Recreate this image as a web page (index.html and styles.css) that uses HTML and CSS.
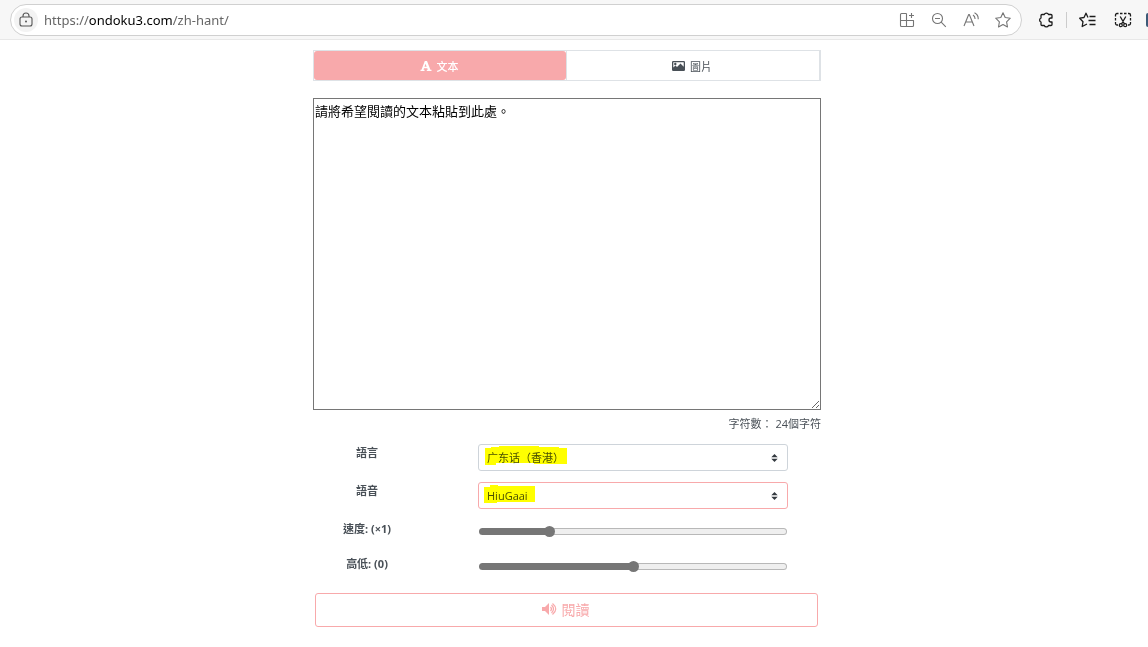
FILE: index.html
```html
<!DOCTYPE html>
<html lang="zh-Hant">
<head>
    <meta charset="UTF-8">
    <meta name="viewport" content="width=device-width, initial-scale=1.0">
    <title>ondoku3</title>
    <link rel="stylesheet" href="styles.css">
</head>
<body>
    <!-- Browser toolbar -->
    <header class="toolbar">
        <div class="address-bar">
            <button class="site-info" type="button" aria-label="Site info">
                <svg width="16" height="16" viewBox="0 0 16 16">
                    <rect x="2" y="5" width="12" height="9" rx="2"/>
                    <path d="M5 5V4a3 3 0 0 1 6 0v1"/>
                    <circle class="solid" cx="8" cy="9.500" r="1"/>
                </svg>
            </button>
            <div class="url">https://<b>ondoku3.com</b>/zh-hant/</div>
            <div class="address-actions">
                <button type="button" aria-label="Apps">
                    <svg width="16" height="16" viewBox="0 0 16 16">
                        <path d="M7.500 1.500h-5a1 1 0 0 0-1 1v11a1 1 0 0 0 1 1h11a1 1 0 0 0 1-1v-5h-13M7.500 1.500v13M12.500 1v5M10 3.500h5"/>
                    </svg>
                </button>
                <button type="button" aria-label="Zoom out">
                    <svg width="16" height="16" viewBox="0 0 16 16">
                        <circle cx="6.500" cy="6.500" r="5"/>
                        <path d="M10.200 10.200l4.600 4.600M4 6.500h5"/>
                    </svg>
                </button>
                <button type="button" aria-label="Read aloud">
                    <svg width="16" height="16" viewBox="0 0 16 16">
                        <path d="M1 14L5.700 2.500h.6L11 14M2.700 10h6.600M10 3q2.200 1.500 2 4M11.500 .8q4 2 3.700 6.500"/>
                    </svg>
                </button>
                <button type="button" aria-label="Favorite">
                    <svg width="16" height="16" viewBox="0 0 16 16">
                        <path d="M8 .8l2.200 4.700 5.100.7-3.700 3.600.9 5.200L8 12.500 3.500 15l.9-5.200L.7 6.200l5.100-.7z"/>
                    </svg>
                </button>
            </div>
        </div>
        <div class="toolbar-actions">
            <button type="button" aria-label="Extensions">
                <svg width="16" height="16" viewBox="0 0 16 16">
                    <path d="M4 2.500h2.300a2.200 2 0 0 1 4.200 0H13a1 1 0 0 1 1 1V6h-1a2 2 0 0 0 0 4h1v2.500a1 1 0 0 1-1 1h-2.500a2.200 2 0 0 1-4.200 0H4a1 1 0 0 1-1-1V10a2 2.100 0 0 1 0-4V3.500a1 1 0 0 1 1-1z"/>
                </svg>
            </button>
            <span class="divider"></span>
            <button type="button" aria-label="Favorites">
                <svg width="18" height="16" viewBox="0 0 18 16">
                    <path d="M9 5.500L7 1.200 5 5.500l-4.300.7L4 9.700 3.200 14.500 8 12M10.500 4.500h6M9.500 8.500h7M10.500 12.500h6"/>
                </svg>
            </button>
            <button type="button" aria-label="Web capture">
                <svg width="18" height="16" viewBox="0 0 18 16">
                    <path d="M1.500 4.500V3a1.500 1.500 0 0 1 1.500-1.500h1.500M6 1.500h2.500M10 1.500h2.500M14 1.500h1a1.500 1.500 0 0 1 1.500 1.500v1.500M16.500 6v2.500M1.500 6v2.500M1.500 10v1.500a1.500 1.500 0 0 0 1.500 1.500h1M16.500 10v1.500a1.500 1.500 0 0 1-1.500 1.500h-1M6.200 4.500l4.300 7.500M11.800 4.500L7.500 12"/>
                    <circle cx="6.800" cy="13.200" r="1.500"/>
                    <circle cx="11.200" cy="13.200" r="1.500"/>
                </svg>
            </button>
            <button class="profile" type="button" aria-label="Profile"></button>
        </div>
    </header>

    <main class="page">
        <div class="container">
            <div class="tabs">
                <button class="tab active" type="button">
                    <svg width="12" height="10" viewBox="0 0 12 10">
                        <path fill-rule="evenodd" d="M4.800 0h2.200l3.400 8.700H11.500V10H6.800V8.700h1L7.300 7.200H4L3.500 8.700h1V10H.5V8.700h1zM5.500 2.700L4.500 5.800h2.200z"/>
                    </svg>
                    文本
                </button>
                <button class="tab" type="button">
                    <svg width="13" height="10" viewBox="0 0 13 10">
                        <path fill-rule="evenodd" d="M1.200 0h10.600Q13 0 13 1.200v7.600Q13 10 11.800 10H1.200Q0 10 0 8.800V1.200Q0 0 1.200 0zM1.300 1.300v5.200L3.500 4.500 5 6l3.500-3.500 3.200 3.200V1.300zM3.300 1.800a1.200 1.200 0 1 1 0 2.400 1.200 1.200 0 0 1 0-2.400z"/>
                    </svg>
                    圖片
                </button>
            </div>

            <textarea class="text-input" id="text" aria-label="文本">請將希望閱讀的文本粘貼到此處。</textarea>
            <p class="count">字符數： 24個字符</p>

            <!-- Voice settings -->
            <div class="settings">
                <label for="language">語言</label>
                <div class="select-wrap">
                    <select id="language">
                        <option>广东话（香港）</option>
                    </select>
                    <svg class="marker" width="84" height="20" viewBox="0 0 84 20">
                        <path d="M1 2h6V1h8V0h40v1h20v1h8v16H50v-1H12v2H1z"/>
                    </svg>
                </div>

                <label for="voice">語音</label>
                <div class="select-wrap">
                    <select class="selected" id="voice">
                        <option>HiuGaai</option>
                    </select>
                    <svg class="marker" width="84" height="20" viewBox="0 0 84 20">
                        <path d="M0 3h6V1h8v1h37v16H13v1H0z"/>
                    </svg>
                </div>

                <label for="speed">速度: (×1)</label>
                <input class="speed" type="range" id="speed" min="0.3" max="4" step="0.01" value="1.1">

                <label for="pitch">高低: (0)</label>
                <input class="pitch" type="range" id="pitch" min="-20" max="20" value="0">
            </div>

            <button class="read-button" type="button">
                <svg width="15" height="12" viewBox="0 0 15 12">
                    <path d="M0 4h3l4-4v12L3 8H0z"/>
                    <path class="wave" d="M8.500 4q2 2 0 4M9.500 2q4 4 0 8M10.500 .5q6.500 5.500 0 11"/>
                </svg>
                閱讀
            </button>
        </div>
    </main>
</body>
</html>
```
FILE: styles.css
```css
* {
    box-sizing: border-box;
}
body {
    margin: 0;
    background-color: #fff;
    color: #495057;
    font-family: "Open Sans", "Noto Sans CJK TC", sans-serif;
    font-size: 11px;
    overflow: hidden;
}
button {
    font-family: inherit;
    cursor: pointer;
}

/* Toolbar */
.toolbar {
    display: flex;
    align-items: center;
    height: 40px;
    padding-left: 10px;
    background-color: #f7f7f7;
    border-bottom: 1px solid #e8e8e8;
}
.toolbar button {
    display: flex;
    flex: none;
    padding: 0;
    border: 0;
    background: none;
    color: inherit;
}
.toolbar svg {
    fill: none;
    stroke: currentColor;
    stroke-width: 1.1;
    stroke-linejoin: round;
}
.toolbar .solid {
    fill: currentColor;
    stroke: none;
}
.address-bar {
    display: flex;
    flex: 1;
    align-items: center;
    height: 32px;
    padding: 0 10px 0 3px;
    background-color: #fff;
    border: 1px solid #d0d0d0;
    border-radius: 16px;
}
.toolbar .site-info {
    align-items: center;
    justify-content: center;
    width: 24px;
    height: 24px;
    border-radius: 50%;
    background-color: #f3f3f3;
    color: #555;
}
.url {
    flex: 1;
    margin-left: 6px;
    color: #666;
    font-family: "Noto Sans", sans-serif;
    font-size: 13px;
}
.url b {
    color: #000;
    font-weight: 400;
}
.address-actions {
    display: flex;
    gap: 16px;
    color: #757575;
}
.toolbar-actions {
    display: flex;
    align-items: center;
    gap: 12px;
    padding-left: 16px;
    color: #1b1b1b;
}
.toolbar-actions svg {
    stroke-width: 1.3;
}
.toolbar-actions button:nth-of-type(3) {
    margin: 0 2px 0 5px;
}
.divider {
    width: 1px;
    height: 16px;
    background-color: #ccc;
}
.toolbar .profile {
    width: 2px;
    height: 14px;
    border-radius: 7px 0 0 7px;
    background-color: #3c5a78;
}

/* Page */
.page {
    padding: 10px 14px 0 0;
}
.container {
    max-width: 508px;
    margin: 0 auto;
}
.tabs {
    display: flex;
    border: 1px solid #dee2e6;
}
.tab {
    display: flex;
    flex: 1;
    align-items: center;
    justify-content: center;
    gap: 5px;
    height: 29px;
    padding: 0 2px 0 0;
    border: solid #dee2e6;
    border-width: 0 1px;
    background-color: #fff;
    color: #495057;
    font-size: 11px;
}
.tab.active {
    border: 0;
    border-radius: 3px;
    background-color: #f8a9ab;
    color: #fff;
    font-weight: 500;
}
.tab svg {
    fill: currentColor;
}
.text-input {
    display: block;
    width: 100%;
    height: 312px;
    margin-top: 17px;
    padding: 2px 1px;
    border: 1px solid #767676;
    border-radius: 0;
    color: #000;
    font-family: inherit;
    font-size: 13px;
    line-height: 20px;
}
.count {
    margin: 6px 0 12px;
    text-align: right;
    line-height: 16px;
}
.settings {
    display: grid;
    grid-template-columns: 108px 1fr;
    column-gap: 57px;
    padding-right: 33px;
}
.settings label {
    padding-top: 1px;
    font-weight: 700;
    line-height: 16px;
    text-align: center;
}
.select-wrap {
    position: relative;
    height: 38px;
}
select {
    width: 100%;
    height: 27px;
    padding: 0 24px 0 8px;
    border: 1px solid #ced4da;
    border-radius: 3px;
    appearance: none;
    background: #fff url("data:image/svg+xml,%3csvg xmlns='http://www.w3.org/2000/svg' viewBox='0 0 4 5'%3e%3cpath fill='%23343a40' d='M2 0L0 2h4zm0 5L0 3h4z'/%3e%3c/svg%3e") no-repeat right 9px center / 7px 8px;
    color: #495057;
    font-family: "Open Sans", "Noto Sans CJK SC", sans-serif;
    font-size: 11px;
}
select.selected {
    border-color: #f8a9ab;
}
/* Highlighter strokes over the chosen values */
.marker {
    position: absolute;
    top: 2px;
    left: 6px;
    fill: #ff0;
    mix-blend-mode: multiply;
    pointer-events: none;
}
input[type="range"] {
    appearance: none;
    width: calc(100% - 2px);
    height: 11px;
    margin: 6px 1px 18px;
    background: none;
}
input[type="range"]::-webkit-slider-runnable-track {
    height: 7px;
    border: 1px solid transparent;
    border-radius: 4px;
    background:
        linear-gradient(#767676, #767676) border-box no-repeat,
        linear-gradient(#efefef, #efefef) padding-box,
        #b8b8b8 border-box;
}
input.speed::-webkit-slider-runnable-track {
    background-size: 22% 100%, auto;
}
input.pitch::-webkit-slider-runnable-track {
    background-size: 50% 100%, auto;
}
input[type="range"]::-webkit-slider-thumb {
    appearance: none;
    width: 11px;
    height: 11px;
    margin-top: -3px;
    border-radius: 50%;
    background-color: #767676;
}
.read-button {
    display: flex;
    align-items: center;
    justify-content: center;
    gap: 5px;
    width: calc(100% - 5px);
    height: 34px;
    margin: 3px 3px 0 2px;
    padding: 0 2px 2px 0;
    border: 1px solid #f8a9ab;
    border-radius: 3px;
    background-color: #fff;
    color: #f8a9ab;
    font-size: 14px;
}
.read-button svg {
    fill: currentColor;
}
.read-button .wave {
    fill: none;
    stroke: currentColor;
    stroke-width: 1.2;
}
```
